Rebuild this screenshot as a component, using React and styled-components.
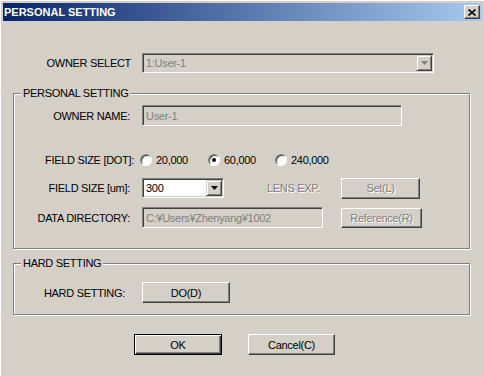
import React from 'react';
import styled, { createGlobalStyle } from 'styled-components';

const GlobalStyle = createGlobalStyle`
  html, body { margin: 0; padding: 0; background: #d4d0c8; }
  body {
    font-family: "Liberation Sans", Arial, sans-serif;
    font-size: 11px;
    letter-spacing: -0.3px;
    color: #000;
  }
  * { box-sizing: border-box; }
`;

const Window = styled.div`
  width: 484px;
  height: 376px;
  padding: 2px;
  background: #d4d0c8;
  display: flex;
  flex-direction: column;
  border-top: 1px solid #fff;
  border-left: 1px solid #fff;
`;

const TitleBar = styled.div`
  height: 18px;
  flex: none;
  display: flex;
  align-items: center;
  justify-content: space-between;
  padding: 0 2px 0 1px;
  background: linear-gradient(to right, #0a246a, #a6caf0);
`;

const Title = styled.span`
  color: #fff;
  font-weight: bold;
  font-size: 11px;
  letter-spacing: 0;
`;

const CloseBox = styled.div`
  width: 16px;
  height: 14px;
  display: flex;
  align-items: center;
  justify-content: center;
  background: #d4d0c8;
  border: 1px solid;
  border-color: #fff #404040 #404040 #fff;
  box-shadow: inset -1px -1px 0 #808080;
`;

const Body = styled.div`
  display: flex;
  flex-direction: column;
  padding: 0 12px 0 10px;
`;

const Row = styled.div`
  display: flex;
  align-items: center;
  height: ${({ $h }) => $h || 20}px;
  margin-top: ${({ $mt }) => $mt || 0}px;
`;

const Label = styled.span`
  flex: none;
  width: ${({ $w }) => $w}px;
  margin-right: ${({ $gap }) => $gap}px;
  text-align: right;
  white-space: nowrap;
  color: ${({ $dim }) => ($dim ? '#808080' : '#000')};
`;

const Group = styled.div`
  position: relative;
  margin-top: ${({ $mt }) => $mt}px;
  padding: ${({ $pt }) => $pt}px 0 ${({ $pb }) => $pb}px 0;
  border: 1px solid #808080;
  box-shadow: inset 1px 1px 0 #fff, 1px 1px 0 #fff;
  display: flex;
  flex-direction: column;
`;

const Legend = styled.span`
  position: absolute;
  top: -7px;
  left: 7px;
  padding: 0 2px;
  background: #d4d0c8;
  line-height: 12px;
  white-space: nowrap;
`;

const Sunken = styled.div`
  flex: none;
  width: ${({ $w }) => $w}px;
  height: ${({ $h }) => $h || 21}px;
  display: flex;
  align-items: center;
  padding-left: 3px;
  background: ${({ $white }) => ($white ? '#fff' : '#d4d0c8')};
  color: ${({ $white }) => ($white ? '#000' : '#808080')};
  border: 1px solid;
  border-color: #808080 #fff #fff #808080;
  box-shadow: inset 1px 1px 0 #404040, inset -1px -1px 0 #d4d0c8;
  white-space: nowrap;
  overflow: hidden;
`;

const ComboText = styled.span`
  flex: 1;
`;

const ArrowBox = styled.div`
  flex: none;
  width: 16px;
  height: ${({ $h }) => $h || 16}px;
  margin-right: 1px;
  display: flex;
  align-items: center;
  justify-content: center;
  background: #d4d0c8;
  border: 1px solid;
  border-color: #d4d0c8 #404040 #404040 #d4d0c8;
  box-shadow: inset 1px 1px 0 #fff, inset -1px -1px 0 #808080;
`;

const Button = styled.div`
  flex: none;
  width: ${({ $w }) => $w}px;
  height: ${({ $h }) => $h || 21}px;
  margin-left: ${({ $ml }) => $ml || 0}px;
  display: flex;
  align-items: center;
  justify-content: center;
  background: #d4d0c8;
  border: 1px solid;
  border-color: ${({ $default }) =>
    $default ? '#000' : '#fff #404040 #404040 #fff'};
  box-shadow: ${({ $default }) =>
    $default
      ? 'inset 1px 1px 0 #fff, inset -1px -1px 0 #404040, inset -2px -2px 0 #808080'
      : 'inset -1px -1px 0 #808080'};
  color: ${({ $disabled }) => ($disabled ? '#808080' : '#000')};
  text-shadow: ${({ $disabled }) => ($disabled ? '1px 1px 0 #fff' : 'none')};
  white-space: nowrap;
`;

const DimText = styled.span`
  flex: none;
  color: #808080;
  text-shadow: 1px 1px 0 #fff;
  margin-left: ${({ $ml }) => $ml}px;
  width: ${({ $w }) => $w}px;
  white-space: nowrap;
`;

const RadioOption = styled.div`
  flex: none;
  width: ${({ $w }) => $w || 'auto'};
  display: flex;
  align-items: center;
  gap: 4px;
`;

const RadioCircle = styled.div`
  width: 12px;
  height: 12px;
  border-radius: 50%;
  background: #fff;
  border: 1px solid;
  border-color: #808080 #fff #fff #808080;
  box-shadow: inset 1px 1px 0 #404040;
  display: flex;
  align-items: center;
  justify-content: center;
`;

const Dot = styled.div`
  width: 4px;
  height: 4px;
  border-radius: 50%;
  background: #000;
`;

const ButtonRow = styled.div`
  display: flex;
  margin-top: 19px;
  padding-left: 121px;
  gap: 26px;
`;

const Arrow = ({ color = '#000' }) => (
  <svg width="7" height="4" viewBox="0 0 7 4">
    <polygon points="0,0 7,0 3.5,4" fill={color} />
  </svg>
);

const CloseIcon = () => (
  <svg width="8" height="7" viewBox="0 0 8 7">
    <path d="M0.5 0.5 L7.5 6.5 M7.5 0.5 L0.5 6.5" stroke="#000" strokeWidth="1.6" />
  </svg>
);

const Radio = ({ label, checked, w }) => (
  <RadioOption $w={w}>
    <RadioCircle>{checked && <Dot />}</RadioCircle>
    <span>{label}</span>
  </RadioOption>
);

export default function App() {
  return (
    <>
      <GlobalStyle />
      <Window>
        <TitleBar>
          <Title>PERSONAL SETTING</Title>
          <CloseBox>
            <CloseIcon />
          </CloseBox>
        </TitleBar>
        <Body>
          <Row $mt={32} $h={20}>
            <Label $w={118} $gap={11}>OWNER SELECT</Label>
            <Sunken $w={292} $h={20}>
              <ComboText>1:User-1</ComboText>
              <ArrowBox>
                <Arrow color="#808080" />
              </ArrowBox>
            </Sunken>
          </Row>

          <Group $mt={20} $pt={11} $pb={20}>
            <Legend>PERSONAL SETTING</Legend>
            <Row $h={21}>
              <Label $w={116} $gap={12}>OWNER NAME:</Label>
              <Sunken $w={260}>User-1</Sunken>
            </Row>
            <Row $mt={26} $h={16}>
              <Label $w={120} $gap={6}>FIELD SIZE [DOT]:</Label>
              <Radio label="20,000" w="68px" />
              <Radio label="60,000" w="67px" checked />
              <Radio label="240,000" />
            </Row>
            <Row $mt={10} $h={20}>
              <Label $w={116} $gap={12}>FIELD SIZE [um]:</Label>
              <Sunken $w={82} $h={20} $white>
                <ComboText>300</ComboText>
                <ArrowBox>
                  <Arrow />
                </ArrowBox>
              </Sunken>
              <DimText $ml={43} $w={74}>LENS EXP.</DimText>
              <Button $w={79} $disabled>Set(L)</Button>
            </Row>
            <Row $mt={9} $h={21}>
              <Label $w={116} $gap={12}>DATA DIRECTORY:</Label>
              <Sunken $w={181}>C:¥Users¥Zhenyang¥1002</Sunken>
              <Button $w={81} $h={20} $ml={18} $disabled>Reference(R)</Button>
            </Row>
          </Group>

          <Group $mt={14} $pt={18} $pb={11}>
            <Legend>HARD SETTING</Legend>
            <Row $h={21}>
              <Label $w={111} $gap={17}>HARD SETTING:</Label>
              <Button $w={88}>DO(D)</Button>
            </Row>
          </Group>

          <ButtonRow>
            <Button $w={88} $h={21} $default>OK</Button>
            <Button $w={87} $h={21}>Cancel(C)</Button>
          </ButtonRow>
        </Body>
      </Window>
    </>
  );
}
